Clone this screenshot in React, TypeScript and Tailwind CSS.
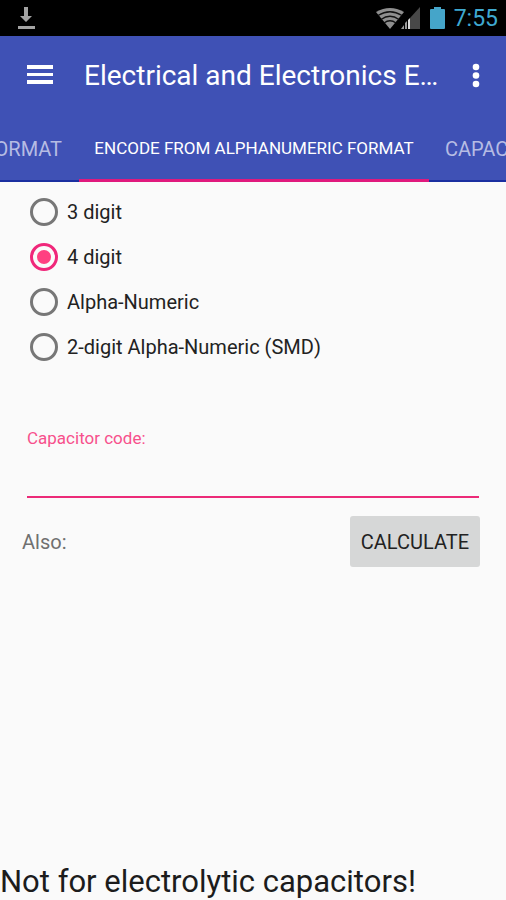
import { useState } from "react";

const formats = ["3 digit", "4 digit", "Alpha-Numeric", "2-digit Alpha-Numeric (SMD)"];

function StatusBar() {
  return (
    <div className="flex h-9 items-center justify-between bg-black pr-2 pl-4">
      <svg width="20" height="24" viewBox="0 0 20 24" fill="#a3a3a3" aria-hidden="true">
        <path d="M8 1h4v9h4l-6 6-6-6h4zM2 20h17v3H2z" />
      </svg>
      <div className="flex items-center">
        <svg width="28" height="22" viewBox="0 0 28 22" aria-hidden="true">
          <path d="M0 5Q14-3 28 5L14 22Z" fill="#8f8f8f" />
          <g fill="none" stroke="#111" strokeWidth="1.300">
            <path d="M2 8.500Q14 1 26 8.500M5 12.500Q14 6 23 12.500M8 16Q14 11.500 20 16" />
          </g>
        </svg>
        <svg className="-ml-1" width="22" height="22" viewBox="0 0 22 22" aria-hidden="true">
          <path d="M10 22V11L20 0V22Z" fill="#484848" />
          <path d="M1 22L4 18V22ZM5 22V16L7 14V22Z" fill="#9a9a9a" />
          <path d="M8 22V13L10 11V22Z" fill="#d8d8d8" />
        </svg>
        <svg className="ml-2" width="15" height="22" viewBox="0 0 15 22" fill="#45a5c9" aria-hidden="true">
          <path d="M4 0h7v2h3q1 0 1 1v18q0 1-1 1H1q-1 0-1-1V3q0-1 1-1h3z" />
        </svg>
        <span className="ml-2 w-[45px] pt-px text-right text-[23px] leading-9 text-[#3fa9d0]">7:55</span>
      </div>
    </div>
  );
}

function Toolbar() {
  return (
    <header className="flex h-20 items-center pr-4 pl-6">
      <button type="button" aria-label="Open menu" className="flex h-12 w-8 shrink-0 items-center justify-center">
        <svg width="28" height="22" viewBox="0 0 28 22" fill="white">
          <path d="M1 0h26v4H1zM1 8h26v3H1zM1 15h26v4H1z" />
        </svg>
      </button>
      <h1 className="ml-7 flex-1 truncate text-[28px] leading-9 text-white">Electrical and Electronics E…</h1>
      <button type="button" aria-label="More options" className="ml-2 flex h-12 w-7 shrink-0 items-center justify-center">
        <svg width="8" height="26" viewBox="0 0 8 26" fill="white">
          <circle cx="4" cy="4" r="3.300" />
          <circle cx="4" cy="12.500" r="3.300" />
          <circle cx="4" cy="21" r="3.300" />
        </svg>
      </button>
    </header>
  );
}

function Tabs() {
  return (
    <nav role="tablist" className="grid h-[66px] grid-cols-[79px_1fr_77px] text-xl whitespace-nowrap">
      <button
        type="button"
        role="tab"
        aria-selected="false"
        className="flex items-center justify-end overflow-hidden border-b-2 border-[#1a2fa0] pt-0.5 pr-[17px] text-[#b6bce4]"
      >
        FORMAT
      </button>
      <button
        type="button"
        role="tab"
        aria-selected="true"
        className="border-b-3 border-[#e0197d] pt-0.5 text-[17px] text-white"
      >
        ENCODE FROM ALPHANUMERIC FORMAT
      </button>
      <button
        type="button"
        role="tab"
        aria-selected="false"
        className="flex items-center overflow-hidden border-b-2 border-[#1a2fa0] pt-0.5 pl-4 text-[#b6bce4]"
      >
        CAPACITOR
      </button>
    </nav>
  );
}

export default function App() {
  const [format, setFormat] = useState("4 digit");
  const [code, setCode] = useState("");

  return (
    <div className="flex min-h-screen flex-col bg-[#fafafa] font-[Roboto,sans-serif]">
      <StatusBar />
      <div className="bg-[#3f51b5]">
        <Toolbar />
        <Tabs />
      </div>

      <main className="flex flex-1 flex-col">
        <fieldset aria-label="Code format" className="mt-[7px] pl-[30px]">
          {formats.map((name) => (
            <label key={name} className="flex h-[45px] items-center gap-[9px] text-xl text-[#222]">
              <input
                type="radio"
                name="format"
                value={name}
                checked={format === name}
                onChange={() => setFormat(name)}
                className="grid size-7 appearance-none place-items-center rounded-full border-3 border-[#777] checked:border-[#f0277a] checked:before:size-3.5 checked:before:rounded-full checked:before:bg-[#ff4081]"
              />
              {name}
            </label>
          ))}
        </fieldset>

        <div className="mt-[57px] flex flex-col px-[27px]">
          <label htmlFor="code" className="text-[17px] leading-6 text-[#f7508c]">
            Capacitor code:
          </label>
          <input
            id="code"
            type="text"
            value={code}
            onChange={(e) => setCode(e.target.value)}
            className="h-12 w-full border-b-2 border-[#ec2a78] bg-transparent text-xl outline-none"
          />
        </div>

        <div className="mt-[18px] flex items-center justify-between pr-[26px] pl-[22px]">
          <span className="text-xl text-[#707070]">Also:</span>
          <button type="button" className="h-[51px] rounded-[3px] bg-[#d6d7d7] px-[11px] text-xl text-[#222]">
            CALCULATE
          </button>
        </div>

        <p className="mt-auto text-[31px] leading-9 text-[#1c1c1c]">Not for electrolytic capacitors!</p>
      </main>
    </div>
  );
}
